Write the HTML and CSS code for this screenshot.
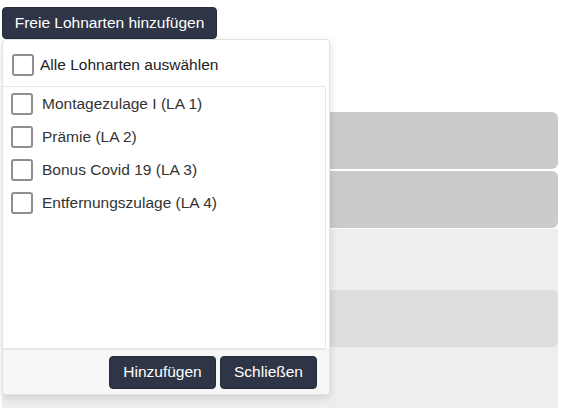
FILE: index.html
```html
<!DOCTYPE html>
<html lang="de">
<head>
<meta charset="utf-8">
<link rel="stylesheet" href="styles.css">
</head>
<body>
<div class="toolbar">
  <button class="btn btn-main">Freie Lohnarten hinzufügen</button>
</div>
<div class="table">
  <div class="row dark"></div>
  <div class="row dark"></div>
  <div class="group">
    <div class="row mid"></div>
  </div>
</div>
<div class="panel">
  <label class="selectall"><span class="cb"></span><span>Alle Lohnarten auswählen</span></label>
  <div class="list">
    <label class="item"><span class="cb"></span><span>Montagezulage I (LA 1)</span></label>
    <label class="item"><span class="cb"></span><span>Prämie (LA 2)</span></label>
    <label class="item"><span class="cb"></span><span>Bonus Covid 19 (LA 3)</span></label>
    <label class="item"><span class="cb"></span><span>Entfernungszulage (LA 4)</span></label>
  </div>
  <div class="footer">
    <button class="btn btn-add">Hinzufügen</button>
    <button class="btn btn-close">Schließen</button>
  </div>
</div>
</body>
</html>
```
FILE: styles.css
```css
html, body { margin: 0; padding: 0; background: #fff; }
body {
  font-family: "Liberation Sans", Arial, sans-serif;
  font-size: 15.5px;
  color: #333;
  position: relative;
  width: 562px;
  height: 408px;
  overflow: hidden;
}
.toolbar { padding: 7px 0 0 2px; height: 32px; }
.btn {
  font-family: "Liberation Sans", Arial, sans-serif;
  font-size: 15.5px;
  color: #fff;
  background: #2e3547;
  border: 1px solid #262c3b;
  border-radius: 4px;
  padding: 0 14px;
  cursor: pointer;
}
.btn-main { height: 32px; width: 215px; padding: 0; }
.table { margin: 73px 0 0 2px; width: 556px; }
.row { height: 57px; border-radius: 0 6px 6px 0; }
.dark { background: #cbcbcb; margin-bottom: 2px; }
.dark + .dark { margin-bottom: 1px; }
.group { background: #eeeeee; padding: 61px 0 70px; }
.mid { background: #dddddd; }
.panel {
  position: absolute;
  top: 39px;
  left: 2px;
  width: 326px;
  height: 354px;
  background: #fff;
  border: 1px solid #e2e2e2;
  border-radius: 4px;
  box-shadow: 0 3px 8px rgba(0,0,0,0.13);
  display: flex;
  flex-direction: column;
}
.cb {
  box-sizing: border-box;
  width: 22px;
  height: 22px;
  border: 2px solid #8f8f8f;
  border-radius: 3px;
  flex: none;
  background: #fff;
}
.selectall {
  display: flex;
  align-items: center;
  gap: 6px;
  box-sizing: border-box;
  height: 46px;
  padding: 4px 0 0 9px;
  color: #222;
}
.list {
  flex: 1;
  margin-right: 3px;
  border: 1px solid #e6e6e6;
  border-left: none;
  border-radius: 0 3px 3px 0;
}
.item {
  display: flex;
  align-items: center;
  gap: 9px;
  height: 33px;
  padding-left: 8px;
}
.footer {
  height: 44px;
  background: #f7f7f7;
  border-top: 1px solid #e3e7ee;
  display: flex;
  justify-content: flex-end;
  align-items: center;
  gap: 4px;
  padding-right: 12px;
  border-radius: 0 0 4px 4px;
}
.footer .btn { height: 33px; }
.btn-add { width: 107px; padding: 0; }
.btn-close { width: 97px; padding: 0; }
```
